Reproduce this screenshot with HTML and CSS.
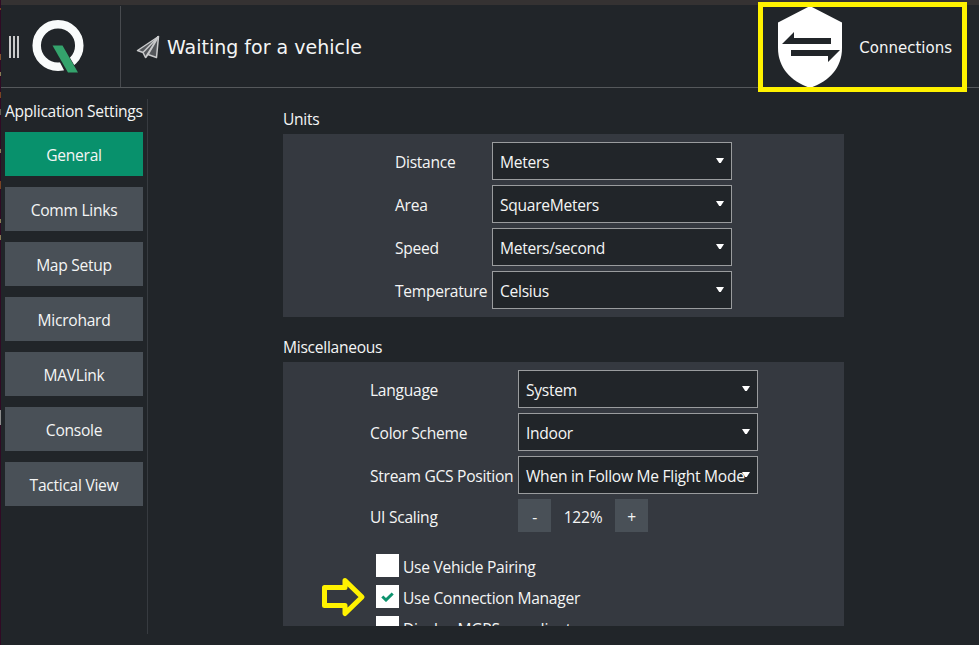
FILE: index.html
```html
<!DOCTYPE html>
<html lang="en">
<head>
<meta charset="utf-8">
<title>Application Settings</title>
<link rel="stylesheet" href="styles.css">
</head>
<body>
<div class="desktop-edge"></div>
<div class="window">
  <div class="titlebar"></div>
  <header class="toolbar">
    <div class="brand">
      <div class="grip"><i></i><i></i><i></i></div>
      <svg class="logo" width="54" height="56" viewBox="0 0 54 56">
        <circle cx="26" cy="26.500" r="21.300" fill="none" stroke="#f9fbfb" stroke-width="8.500"/>
        <path d="M19 26H30.500L48 56H34.500Z" fill="#212529"/>
        <path d="M20.500 26.500H30.500L46 53.500H36Z" fill="#34a36c"/>
      </svg>
    </div>
    <div class="status">
      <svg class="plane" width="24" height="24" viewBox="0 0 24 24" fill="none" stroke="#c9cacb" stroke-width="1.500" stroke-linejoin="round">
        <path d="M22.500 1.500L1.500 15.500L7 17.500L9.500 22.500L12 19.500L20.500 22.500Z" fill="#54575b"/>
        <path d="M22.500 1.500L7 17.500M22.500 1.500L9.500 22.500M22.500 1.500L12 19.500"/>
      </svg>
      <span class="status-text">Waiting for a vehicle</span>
    </div>
    <div class="connections">
      <svg class="shield" width="66" height="82" viewBox="0 0 66 82">
        <path d="M33 0L65 16.500V42C65 61 53 75 33 82C13 75 1 61 1 42V16.500Z" fill="#fff"/>
        <path d="M5 38L17 26V32H54V38ZM14 44H63L51 56V50H14Z" fill="#212529"/>
      </svg>
      <span>Connections</span>
    </div>
  </header>
  <main class="content">
    <nav class="sidebar">
      <h1>Application Settings</h1>
      <button class="active">General</button>
      <button>Comm Links</button>
      <button>Map Setup</button>
      <button>Microhard</button>
      <button>MAVLink</button>
      <button>Console</button>
      <button>Tactical View</button>
    </nav>
    <div class="settings">
      <h2>Units</h2>
      <section class="panel units">
        <div class="fields">
          <label>Distance</label><div class="combo">Meters</div>
          <label>Area</label><div class="combo">SquareMeters</div>
          <label>Speed</label><div class="combo">Meters/second</div>
          <label>Temperature</label><div class="combo">Celsius</div>
        </div>
      </section>
      <h2 class="misc-title">Miscellaneous</h2>
      <section class="panel misc">
        <div class="fields">
          <label>Language</label><div class="combo">System</div>
          <label>Color Scheme</label><div class="combo">Indoor</div>
          <label>Stream GCS Position</label><div class="combo">When in Follow Me Flight Mode</div>
          <label>UI Scaling</label>
          <div class="scaler"><button>-</button><span>122%</span><button>+</button></div>
        </div>
        <div class="checks">
          <div class="check"><i class="box"></i><span>Use Vehicle Pairing</span></div>
          <div class="check"><i class="box"><svg width="13" height="10" viewBox="0 0 13 10"><path d="M1.300 4.500L5 8L11.700 1.500" fill="none" stroke="#0d936e" stroke-width="3"/></svg></i><span>Use Connection Manager</span></div>
          <div class="check"><i class="box"></i><span>Display MGRS coordinates</span></div>
        </div>
      </section>
    </div>
  </main>
</div>
<div class="highlight"></div>
<svg class="pointer" width="46" height="42" viewBox="0 0 46 42"><path d="M3.500 11.500H24V4.500L41 21L24 37.500V29.500H3.500Z" fill="none" stroke="#fff200" stroke-width="5" stroke-linejoin="round"/></svg>
</body>
</html>
```

FILE: styles.css
```css
* { box-sizing: border-box; }

body {
  margin: 0;
  width: 979px;
  height: 645px;
  overflow: hidden;
  display: flex;
  background: #212529;
  color: #f4f5f5;
  font: 15.600px/20px "Open Sans", "Noto Sans", sans-serif;
  letter-spacing: -0.280px;
}

h1, h2 { margin: 0; font-size: inherit; font-weight: 400; line-height: 20px; }

button {
  border: 0;
  padding: 0;
  font: inherit;
  letter-spacing: inherit;
  color: inherit;
  background: #495057;
}

.desktop-edge {
  width: 1px;
  background: linear-gradient(#300a24 0 8px, #7a4324 8px 10px, #300a24 10px 54px, #85502e 54px 60px, #300a24 60px 72px, #8a7b55 72px 76px, #300a24 76px 92px, #7a4324 92px 98px, #300a24 98px 109px, #656055 109px 115px, #300a24 115px 149px, #8a7b55 149px 153px, #300a24 153px 181px, #7a4324 181px 189px, #300a24 189px 219px, #8a7b55 219px 223px, #300a24 223px 235px, #8a7b55 235px 240px, #300a24 240px 410px, #8c8c8c 410px 425px, #300a24 425px);
}

.window { flex: 1; display: flex; flex-direction: column; }
.titlebar { height: 5px; background: #353232; }

.toolbar {
  height: 83px;
  display: flex;
  border-bottom: 1px solid #55585b;
  letter-spacing: 0;
}

.brand {
  width: 120px;
  margin-top: 1px;
  padding-left: 8px;
  display: flex;
  border-right: 1px solid #484b4f;
}
.grip { display: flex; gap: 2px; margin-top: 30px; height: 22px; }
.grip i { width: 2px; background: #c9caca; }
.logo { margin: 13px 0 0 13px; }

.status { display: flex; align-items: center; padding-left: 15px; }
.plane { margin-top: 2px; }
.status-text { margin: 1px 0 0 7px; font: 19px/24px "DejaVu Sans", sans-serif; }

.connections {
  margin-left: auto;
  display: flex;
  align-items: center;
  padding: 2px 27px 0 0;
  font: 15px/20px "DejaVu Sans", sans-serif;
}
.connections span { margin-top: 1px; }
.shield { margin-right: 16px; }

.content { flex: 1; display: flex; }

.sidebar {
  width: 147px;
  height: 535px;
  margin-top: 11px;
  padding: 2px 4px 0;
  border-right: 1px solid #373b40;
  display: flex;
  flex-direction: column;
}
.sidebar h1 { white-space: nowrap; margin-bottom: 11px; }
.sidebar button { height: 44px; margin-bottom: 11px; padding-top: 2px; }
.sidebar .active { background: #08916c; }

.settings { width: 561px; margin: 21px 0 0 135px; }
.settings h2 { margin-bottom: 5px; }
.settings .misc-title { margin-top: 20px; }

.panel { background: #353940; padding: 8px 0; }
.units { height: 183px; }
.misc { height: 264px; overflow: hidden; padding-bottom: 0; }

.fields {
  display: grid;
  grid-template-columns: 97px 240px;
  row-gap: 5px;
  justify-content: center;
  align-items: center;
}
.misc .fields {
  grid-template-columns: 148px 240px;
  justify-content: start;
  padding-left: 87px;
}
.fields label { padding-top: 2px; white-space: nowrap; }

.combo {
  height: 38px;
  padding: 9px 7px;
  position: relative;
  border: 1px solid #9a9c9e;
  background: #212529;
  white-space: nowrap;
}
.combo::after {
  content: "";
  position: absolute;
  right: 7px;
  top: 15px;
  width: 8px;
  height: 5px;
  background: #fff;
  clip-path: polygon(0 0, 100% 0, 60% 100%, 40% 100%);
}

.scaler { display: flex; align-items: center; }
.scaler button { width: 33px; height: 33px; padding-top: 2px; }
.scaler span { width: 64px; padding-top: 2px; text-align: center; }

.checks { margin: 22px 0 0 93px; }
.check { display: flex; align-items: center; gap: 4px; height: 23px; margin-bottom: 8px; white-space: nowrap; }
.check span { padding-top: 2px; }
.box { width: 23px; height: 23px; background: #fff; display: flex; align-items: center; justify-content: center; }

.highlight {
  position: absolute;
  left: 758px;
  top: 2px;
  width: 209px;
  height: 90px;
  border: 5px solid #fff200;
}
.pointer { position: absolute; left: 321px; top: 576px; }
```
